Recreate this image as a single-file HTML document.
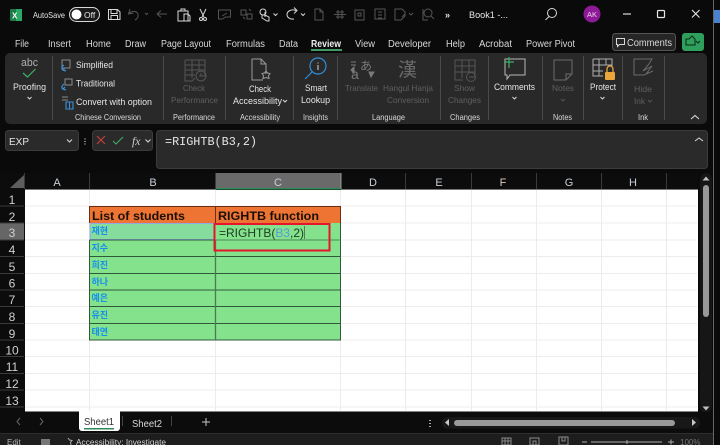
<!DOCTYPE html>
<html><head><meta charset="utf-8"><style>
html,body{margin:0;padding:0;background:#0a0a0a;width:720px;height:445px;overflow:hidden}
svg{display:block;font-family:"Liberation Sans","Noto Sans CJK KR",sans-serif}
.w{fill:#e6e6e6;font-size:9px}.g{fill:#5f5f5f;font-size:8.5px}.l{fill:#d8d8d8;font-size:8px}
.t{fill:#d8d8d8;font-size:10px}.h{fill:#c8d0d8;font-size:11px;text-anchor:middle}.r{fill:#d0d0d0;font-size:12px;text-anchor:middle}
.k{fill:#1590ee;font-size:9px;font-weight:700;font-family:"Noto Sans CJK KR","NanumGothic",sans-serif}
.ic{fill:none;stroke:#d8d8d8;stroke-width:1}.id{fill:none;stroke:#555;stroke-width:1}
.sep{stroke:#4a4a4a;stroke-width:1}
</style></head><body>
<svg width="720" height="445" viewBox="0 0 720 445" xmlns="http://www.w3.org/2000/svg">
<rect width="720" height="445" fill="#0a0a0a"/>
<!-- title bar -->
<rect x="10" y="9" width="12" height="12" rx="1" fill="#1b7a45"/><rect x="16" y="9" width="6" height="12" fill="#2aa866"/>
<text x="12" y="18.5" font-size="8" font-weight="700" fill="#fff">X</text>
<text x="33" y="18" class="w" style="font-size:8.5px" textLength="32" lengthAdjust="spacingAndGlyphs">AutoSave</text>
<rect x="69.5" y="7.5" width="30" height="14" rx="7" fill="#1a1a1a" stroke="#d8d8d8"/><circle cx="76.5" cy="14.5" r="5" fill="#fff"/>
<text x="84" y="18" class="w" style="font-size:8.5px">Off</text>
<path class="ic" d="M108.500 9.500h9l2.500 2.500v7.500h-11.500zM111 9.500v4h6v-4M111 19.500v-4h6.500v4"/>
<path class="id" d="M130 9l-1.500 5 5-1M129 13.500c3-3 8-3 9 1 .6 2.500-1 4.500-3 5.500"/><path class="id" d="M145 13l1.500 1.500 1.500-1.500"/>
<path class="id" d="M157 14h10M157 14l4-3.500M157 14l4 3.500"/>
<path class="ic" d="M178 11h10v10h-10zM181 11v-2h4v2M184 14h4l2 2v5h-6z"/>
<path class="ic" d="M200 9l4 8M206 9l-4 8"/><circle class="ic" cx="201" cy="19" r="1.500"/><circle class="ic" cx="205" cy="19" r="1.500"/>
<path class="id" d="M218.500 10h12v7h-5l-3 2h-4zM222 16l5-3"/>
<path class="id" d="M241 10h5v5h-5zM247 14h5v5h-5zM243 17l2 2M249 9l2 2"/>
<path class="ic" d="M263 9a3 3 0 1 1 0 6a3 3 0 1 1 0-6zM262 15v3l5 3h2v-4l-4-2zM265 12v5"/>
<path d="M273.500 13.500l2 2 2-2" class="ic"/>
<path class="ic" d="M296 10.500c-5-2-9 1-9 4 0 3 3 5 7 4.500M294 7.500l3 3-3 3"/><path d="M301 13.500l2 2 2-2" class="ic"/>
<path class="id" d="M315 9h5l3 3v8h-8zM320 9v3h3"/>
<path class="id" d="M334 14.500h12M336 12h8M336 17h8M338 10v9M342 10v9"/>
<path class="id" d="M355 10h9v10h-9zM358 13h3v3h-3z"/>
<path class="id" d="M375 9h10v10h-10zM378 12h4M378 15h4M378 18h4"/>
<path class="id" d="M395 9h7l3 3v4l-4 4h-6zM405 14l-3 3M409 13l2 2 2-2"/>
<circle class="id" cx="428" cy="13" r="4"/><path class="id" d="M423 9v11h5M431 16l3 3"/>
<text x="445" y="18" class="w" style="font-size:9px;font-weight:700">»</text>
<text x="469" y="18" class="w" style="font-size:9.5px" textLength="39" lengthAdjust="spacingAndGlyphs">Book1  -...</text>
<circle cx="552" cy="13" r="4.500" class="ic"/><path class="ic" d="M549 16.500l-3.500 3.500"/>
<circle cx="592" cy="14" r="8.500" fill="#8d1a96"/><text x="592" y="17" text-anchor="middle" font-size="7.5" fill="#f0d0f0">AK</text>
<path d="M623 14h8" stroke="#d8d8d8" stroke-width="1.200"/>
<rect x="657.500" y="10.500" width="7" height="7" rx="1" fill="none" stroke="#e6e6e6" stroke-width="1.200"/>
<path d="M692 10l7.500 7.500M699.500 10L692 17.500" stroke="#e6e6e6" stroke-width="1.100"/>
<!-- tabs -->
<g class="t">
<text x="15" y="47" class="t" textLength="14" lengthAdjust="spacingAndGlyphs">File</text>
<text x="48" y="47" class="t" textLength="23" lengthAdjust="spacingAndGlyphs">Insert</text>
<text x="86" y="47" class="t" textLength="25" lengthAdjust="spacingAndGlyphs">Home</text>
<text x="125" y="47" class="t" textLength="21" lengthAdjust="spacingAndGlyphs">Draw</text>
<text x="161" y="47" class="t" textLength="50" lengthAdjust="spacingAndGlyphs">Page Layout</text>
<text x="226" y="47" class="t" textLength="39" lengthAdjust="spacingAndGlyphs">Formulas</text>
<text x="279" y="47" class="t" textLength="19" lengthAdjust="spacingAndGlyphs">Data</text>
<text x="311" y="47" class="t" style="font-weight:700;fill:#eee" textLength="30" lengthAdjust="spacingAndGlyphs">Review</text>
<text x="355" y="47" class="t" textLength="20" lengthAdjust="spacingAndGlyphs">View</text>
<text x="388" y="47" class="t" textLength="43" lengthAdjust="spacingAndGlyphs">Developer</text>
<text x="446" y="47" class="t" textLength="19" lengthAdjust="spacingAndGlyphs">Help</text>
<text x="479" y="47" class="t" textLength="33" lengthAdjust="spacingAndGlyphs">Acrobat</text>
<text x="526" y="47" class="t" textLength="49" lengthAdjust="spacingAndGlyphs">Power Pivot</text>
</g>
<rect x="311" y="49" width="31" height="2" fill="#3f9a66"/>
<rect x="612.500" y="33.500" width="63" height="17" rx="3" fill="#262626" stroke="#555"/>
<path class="ic" d="M616.500 38.500h8v6h-5l-2 2v-2h-1z"/>
<text x="627" y="46" class="t" textLength="45" lengthAdjust="spacingAndGlyphs">Comments</text>
<rect x="682" y="33" width="22" height="18" rx="3" fill="#2e9f5c"/>
<path d="M686 39h3l3-3 3 3v6h-9z M696 41l2 2 2-2" fill="none" stroke="#0a2a14"/>
<!-- ribbon -->
<rect x="5" y="53" width="702" height="71" rx="5" fill="#292929"/>
<g class="sep">
<path d="M52.500 56v64M163.500 56v64M225.500 56v64M293.500 56v64M337.500 56v64M440.500 56v64M488.500 56v64M542.500 56v64M583.500 56v64M622.500 56v64M664.500 56v64"/>
</g>
<text x="21" y="66" fill="#b0b0b0" font-size="11" textLength="17" lengthAdjust="spacingAndGlyphs">abc</text>
<path d="M23 73l4.500 4 8-8" fill="none" stroke="#3fae66" stroke-width="1.200"/>
<text x="13" y="90" class="w" textLength="33" lengthAdjust="spacingAndGlyphs">Proofing</text>
<path class="ic" d="M27.500 97l2 2 2-2"/>
<g><path d="M62 60h8v8h-8z" fill="none" stroke="#8a8a8a"/><path d="M63 70c-2-1-1-4 1-5M66 71l-3-1 2-2" fill="none" stroke="#3a8fd8" stroke-width="1.200"/>
<path d="M65 79h7v6h-7z" fill="none" stroke="#8a8a8a"/><path d="M63 89c-2-1-1-4 1-5M66 90l-3-1 2-2" fill="none" stroke="#3a8fd8" stroke-width="1.200"/>
<path d="M62 97h6M62 100h6" stroke="#8a8a8a"/><path d="M66 102h7v7h-7zM69.500 102v7" fill="none" stroke="#3a8fd8" stroke-width="1.100"/></g>
<text x="76" y="68" class="w" textLength="37" lengthAdjust="spacingAndGlyphs">Simplified</text>
<text x="76" y="86.500" class="w" textLength="39" lengthAdjust="spacingAndGlyphs">Traditional</text>
<text x="76" y="105" class="w" textLength="76" lengthAdjust="spacingAndGlyphs">Convert with option</text>
<text x="75" y="120" class="l" textLength="66" lengthAdjust="spacingAndGlyphs">Chinese Conversion</text>
<path class="id" d="M185 60h20v16h-6M185 60v21h7l3-3M185 65h20M185 70h20M185 75h10M192 60v18M199 60v10"/><circle class="id" cx="201" cy="76" r="5"/><path class="id" d="M201 73v3h2"/>
<text x="183" y="91" class="g" textLength="22" lengthAdjust="spacingAndGlyphs">Check</text>
<text x="171" y="103" class="g" textLength="47" lengthAdjust="spacingAndGlyphs">Performance</text>
<text x="173" y="120" class="l" textLength="42" lengthAdjust="spacingAndGlyphs">Performance</text>
<path d="M252 59h9l5 5v10M252 59v21h11M261 59v5h5" fill="none" stroke="#9a9a9a"/><path d="M266 71l1.500 2 2.500.5-1.500 2 .5 3-3-1-3 1 .5-3-1.500-2 2.500-.5z" fill="none" stroke="#9a9a9a"/>
<text x="249" y="92" class="w" textLength="22" lengthAdjust="spacingAndGlyphs">Check</text>
<text x="233" y="104" class="w" textLength="49" lengthAdjust="spacingAndGlyphs">Accessibility</text>
<path class="ic" d="M283 100l2 2 2-2"/>
<text x="240" y="120" class="l" textLength="40" lengthAdjust="spacingAndGlyphs">Accessibility</text>
<circle cx="318" cy="66" r="8" fill="none" stroke="#2f8fd8" stroke-width="1.200"/><path d="M312 72l-7 7" stroke="#2f8fd8" stroke-width="1.200"/><path d="M318 62.500v1M318 65v5" stroke="#d8d8d8"/>
<text x="305" y="91" class="w" textLength="22" lengthAdjust="spacingAndGlyphs">Smart</text>
<text x="301" y="103" class="w" textLength="29" lengthAdjust="spacingAndGlyphs">Lookup</text>
<text x="303" y="120" class="l" textLength="25" lengthAdjust="spacingAndGlyphs">Insights</text>
<text x="351" y="79" fill="#7a7a7a" font-size="14">a</text>
<text x="360" y="70" fill="#7a7a7a" font-size="12" font-family="Noto Sans CJK JP">あ</text>
<path d="M351 62h5M351 65h5M369 72h5l-3 5zM351 70l3-3v6z" fill="#7a7a7a" stroke="#7a7a7a"/>
<text x="345" y="91" class="g" textLength="33" lengthAdjust="spacingAndGlyphs">Translate</text>
<text x="398" y="76" fill="#6a6a6a" font-size="19" font-family="Noto Sans CJK KR">漢</text>
<text x="383" y="91" class="g" textLength="50" lengthAdjust="spacingAndGlyphs">Hangul Hanja</text>
<text x="387" y="103" class="g" textLength="42" lengthAdjust="spacingAndGlyphs">Conversion</text>
<text x="372" y="120" class="l" textLength="33" lengthAdjust="spacingAndGlyphs">Language</text>
<path class="id" d="M455 60h20v17h-6M455 60v20h8M455 66h20M455 72h20M462 60v18M469 60v12"/><circle class="id" cx="471" cy="77" r="4.500"/>
<text x="454" y="91" class="g" textLength="21" lengthAdjust="spacingAndGlyphs">Show</text>
<text x="448" y="103" class="g" textLength="33" lengthAdjust="spacingAndGlyphs">Changes</text>
<text x="450" y="120" class="l" textLength="30" lengthAdjust="spacingAndGlyphs">Changes</text>
<path d="M505 59h20v16h-15l-3 4v-4h-2z" fill="none" stroke="#b8b8b8"/><path d="M504 62h10M509 57v11" stroke="#3fae66" stroke-width="1.200"/>
<text x="494" y="90" class="w" textLength="41" lengthAdjust="spacingAndGlyphs">Comments</text>
<path class="ic" d="M512.500 97l2 2 2-2"/>
<path d="M554 60h18v14l-6 6h-12zM566 80v-6h6" fill="none" stroke="#6a6a6a"/>
<text x="552" y="91" class="g" textLength="22" lengthAdjust="spacingAndGlyphs">Notes</text>
<path class="id" d="M561 99l2 2 2-2"/>
<text x="553" y="120" class="l" textLength="19" lengthAdjust="spacingAndGlyphs">Notes</text>
<path d="M593 59h19v7M593 59v17h10M593 65h19M593 71h10M599 59v17M606 59v6" fill="none" stroke="#b0b0b0"/>
<rect x="605" y="72" width="10" height="8" rx="1" fill="#eaa63a"/><path d="M607 72v-3a3 3 0 0 1 6 0v3" fill="none" stroke="#eaa63a" stroke-width="1.300"/>
<text x="590" y="90" class="w" textLength="26" lengthAdjust="spacingAndGlyphs">Protect</text>
<path class="ic" d="M600.500 97l2 2 2-2"/>
<path d="M634 59h18l-3 5-6 7 9-5-6 8 7-3-9 4h-10z" fill="none" stroke="#6a6a6a"/>
<text x="634" y="92" class="g" textLength="18" lengthAdjust="spacingAndGlyphs">Hide</text>
<text x="634" y="104" class="g" textLength="11" lengthAdjust="spacingAndGlyphs">Ink</text>
<path class="id" d="M648 100l2 2 2-2"/>
<text x="638" y="120" class="l" textLength="10" lengthAdjust="spacingAndGlyphs">Ink</text>
<path d="M691 119l4-3.500 4 3.500" fill="none" stroke="#d8d8d8" stroke-width="1.100"/>
<!-- formula bar -->
<rect x="5.500" y="130.500" width="73" height="20" rx="3" fill="#2a2a2a" stroke="#3c3c3c"/>
<text x="9" y="145" fill="#e6e6e6" font-size="10.5" textLength="20" lengthAdjust="spacingAndGlyphs">EXP</text>
<path class="ic" d="M67 139.500l2.500 2.500 2.500-2.500"/>
<path d="M85 138.500v1M85 141v1M85 143.500v1" stroke="#d8d8d8" stroke-width="1.200"/>
<rect x="92.500" y="130.500" width="60" height="20" rx="3" fill="#2a2a2a" stroke="#3c3c3c"/>
<path d="M97 136l8 8M105 136l-8 8" stroke="#c8403e" stroke-width="1.100"/>
<path d="M113 141l3 3 7-7" fill="none" stroke="#3fae66" stroke-width="1.100"/>
<text x="132" y="145" fill="#cfcfcf" font-size="11.500" font-style="italic" font-family="Liberation Serif">fx</text>
<path class="ic" d="M145.500 139.500l2.500 2.500 2.500-2.500"/>
<rect x="156.500" y="130.500" width="551" height="38" rx="3" fill="#2a2a2a" stroke="#3c3c3c"/>
<text x="165" y="145" fill="#e6e6e6" font-size="11.500" font-family="Liberation Mono" textLength="92" lengthAdjust="spacingAndGlyphs">=RIGHTB(B3,2)</text>
<path d="M695 141l4-3 4 3" fill="none" stroke="#d8d8d8"/>
<!-- headers -->
<rect x="0" y="173" width="698" height="17" fill="#0c0c0c"/>
<path d="M24 175v13H10z" fill="#5e5e5e"/>
<rect x="216" y="173" width="125" height="16" fill="#6a6a6a"/>
<rect x="216" y="188" width="125" height="1.500" fill="#2f8a5a"/>
<path d="M25 189.500H216M341 189.500H698" stroke="#777"/>
<g stroke="#3a3a3a"><path d="M24.500 173v16M89.500 173v16M215.500 173v16M405.500 173v16M471.500 173v16M536.500 173v16M601.500 173v16M666.500 173v16"/></g>
<path d="M341 173v16" stroke="#999"/>
<text x="57" y="186" class="h">A</text><text x="153" y="186" class="h">B</text><text x="278" y="186" class="h">C</text><text x="373" y="186" class="h">D</text><text x="439" y="186" class="h">E</text><text x="503" y="186" fill="#d8c8b8" style="font-size:11px;text-anchor:middle">F</text><text x="569" y="186" class="h">G</text><text x="633" y="186" class="h">H</text>
<!-- grid -->
<rect x="25" y="190" width="673" height="221.500" fill="#fff"/>
<g stroke="#ececec"><path d="M25 206h672M25 223h672M25 240h672M25 256.500h672M25 273.500h672M25 290h672M25 306.500h672M25 323.500h672M25 340h672M25 356.500h672M25 373.500h672M25 390h672M25 407h672"/>
<path d="M89.500 190v221M215.500 190v221M340.500 190v221M405.500 190v221M471.500 190v221M536.500 190v221M601.500 190v221M666.500 190v221"/></g>
<!-- row headers -->
<rect x="0" y="190" width="25" height="221" fill="#0c0c0c"/>
<rect x="0" y="223" width="24" height="17" fill="#666"/>
<path d="M0 206h24M0 223h24M0 240h24M0 256.500h24M0 273.500h24M0 290h24M0 306.500h24M0 323.500h24M0 340h24M0 356.500h24M0 373.500h24M0 390h24M0 407h24" stroke="#3a3a3a"/>
<text x="12" y="204" class="r">1</text><text x="12" y="221" class="r">2</text><text x="12" y="237" class="r">3</text><text x="12" y="254" class="r">4</text><text x="12" y="271" class="r">5</text><text x="12" y="287.500" class="r">6</text><text x="12" y="304" class="r">7</text><text x="12" y="321" class="r">8</text><text x="12" y="338" class="r">9</text><text x="12" y="354.500" class="r">10</text><text x="12" y="371" class="r">11</text><text x="12" y="388" class="r">12</text><text x="12" y="405" class="r">13</text>
<!-- table -->
<rect x="89.500" y="206.500" width="251" height="16.500" fill="#ed7433"/>
<rect x="89.500" y="223" width="251" height="117" fill="#84e28d"/>
<rect x="90" y="223.500" width="125" height="16" fill="#86dc9c" stroke="#8fa8e8"/>
<g stroke="#2f5a3a"><path d="M89.500 256.500h251M89.500 273.500h251M89.500 290h251M89.500 306.500h251M89.500 323.500h251M89 340h252"/>
<path d="M89.500 240h126M89.500 240v100M340.500 223v117" /></g>
<path d="M89 206.500h252M89.500 206v17M215.500 206v17M340.500 206v17" stroke="#6a3010"/>
<path d="M215.500 240v100" stroke="#4a7a50" stroke-width="1.300"/>
<path d="M215 240h126" stroke="#4a8a5a"/>
<text x="92" y="220" font-size="12" font-weight="700" fill="#1a1008" textLength="93" lengthAdjust="spacingAndGlyphs">List of students</text>
<text x="218" y="220" font-size="12" font-weight="700" fill="#1a1008" textLength="101" lengthAdjust="spacingAndGlyphs">RIGHTB function</text>
<text x="91.500" y="234" class="k">재현</text><text x="91.500" y="251" class="k">지수</text><text x="91.500" y="268" class="k">희진</text><text x="91.500" y="285" class="k">하나</text><text x="91.500" y="301" class="k">예은</text><text x="91.500" y="318" class="k">유진</text><text x="91.500" y="335" class="k">태연</text>
<text x="219" y="237" font-size="12" fill="#1e3a22" textLength="85" lengthAdjust="spacingAndGlyphs">=RIGHTB(<tspan fill="#5a9ad8">B3</tspan>,2)</text>
<path d="M304.500 226v13" stroke="#5a7a60"/>
<rect x="214.500" y="224" width="115" height="26.500" fill="none" stroke="#e5152b" stroke-width="2"/>
<!-- scrollbars -->
<rect x="698" y="173" width="15" height="241" fill="#0a0a0a"/>
<rect x="700" y="173" width="12" height="240" rx="6" fill="#161616"/>
<path d="M706 176.500l3.500 4h-7z" fill="#c0c0c0"/>
<rect x="703" y="185" width="6" height="132" rx="3" fill="#999"/>
<path d="M706 410.500l3.500-4h-7z" fill="#c0c0c0"/>
<path d="M713.500 0v445" stroke="#666"/>
<rect x="714" y="10" width="6" height="13" fill="#4a80d0"/>
<!-- sheet tabs -->
<rect x="0" y="412" width="713" height="21" fill="#0c0c0c"/>
<path d="M20 418l-3 3.500 3 3.500" fill="none" stroke="#666"/><path d="M40 418l3 3.500-3 3.500" fill="none" stroke="#666"/>
<path d="M79 411h41l0 1v16a3 3 0 0 1-3 3h-35a3 3 0 0 1-3-3z" fill="#fff"/>
<text x="84" y="425" fill="#333" font-size="10" textLength="30" lengthAdjust="spacingAndGlyphs">Sheet1</text>
<rect x="84" y="428" width="30" height="1.500" fill="#2f8a5a"/>
<path d="M122.500 416v10M171.500 416v10" stroke="#444"/>
<text x="132" y="427" fill="#d8d8d8" font-size="10" textLength="30" lengthAdjust="spacingAndGlyphs">Sheet2</text>
<path d="M202 422h8M206 418v8" stroke="#c8c8c8"/>
<path d="M430 420v1M430 423v1M430 426v1" stroke="#ddd" stroke-width="1.500"/>
<rect x="442" y="417" width="258" height="11.500" rx="5.500" fill="#181818"/>
<path d="M445 422.500l4-3.500v7zM696 422.500l-4-3.500v7z" fill="#c8c8c8"/>
<rect x="454" y="420" width="221" height="6" rx="3" fill="#999"/>
<!-- status -->
<path d="M0 433.500h713" stroke="#2e2e2e"/>
<rect x="0" y="434" width="713" height="11" fill="#1d1d1d"/>
<text x="7" y="445" fill="#b8b8b8" font-size="8">Edit</text>
<path d="M41 439h9v6h-9z" fill="#777"/>
<path d="M68 438l1.500 2 2.500.5-1.500 2 .5 2.500" fill="none" stroke="#aaa"/>
<text x="76" y="445" fill="#d0d0d0" font-size="8" textLength="90" lengthAdjust="spacingAndGlyphs">Accessibility: Investigate</text>
<path d="M502 438h9v7h-9zM505 438v7M508 438v7M502 441h9M530 438h9v7h-9zM533 441h3v4h-3zM559 437h9v8h-9zM562 437v4h3v-4" fill="none" stroke="#8a8a8a"/>
<path d="M582 442h5M591 442h71M627 440v4M668 442h6M671 439.500v5" stroke="#aaa"/>
<text x="680" y="445" fill="#777" font-size="8">100%</text>
</svg>
</body></html>
